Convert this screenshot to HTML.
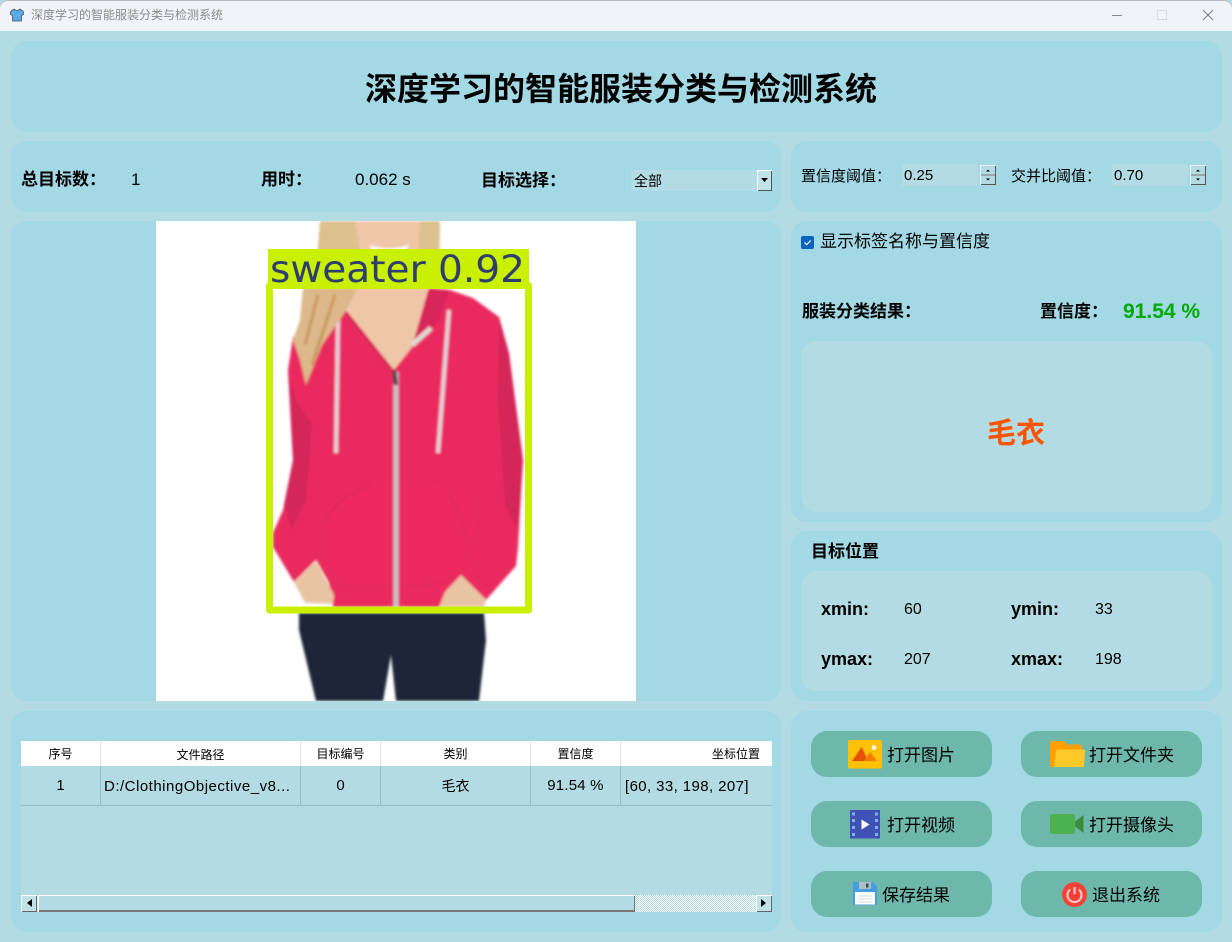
<!DOCTYPE html>
<html lang="zh"><head><meta charset="utf-8"><title>深度学习的智能服装分类与检测系统</title>
<style>
html,body{margin:0;padding:0;background:#fff}
#w{position:relative;width:1232px;height:942px;overflow:hidden;background:#b3dbe3;font-family:"Liberation Sans","Noto Sans CJK SC",sans-serif;color:#000}
.p{position:absolute;background:#a3d8e5;border-radius:16px}
.l{position:absolute;background:#b3dbe3;border-radius:16px}
.t{position:absolute;white-space:nowrap;line-height:24px;height:24px}
.b{font-weight:bold}
.btn{position:absolute;width:181px;height:46px;background:#6eb8ab;border-radius:16px}
.c{text-align:center}
.spin{position:absolute;width:16px;height:20px;background:#b3dbe3;box-shadow:inset 1px 1px 0 #eef,inset -1px -1px 0 #555}
.h{position:absolute;top:741px;height:25px;background:#fff}
.ln{position:absolute;background:#98bcc7}
</style></head><body>
<div id="w">
<div style="position:absolute;left:0;top:0;width:1232px;height:31px;background:#f1f3f8;border-radius:8px 8px 0 0;box-shadow:inset 0 1px 0 #bbb"></div>
<svg style="position:absolute;left:10px;top:8px" width="14" height="14" viewBox="0 0 14 14"><path d="M4 1 1 3 0 6l2.500 1.500V13h9V7.500L14 6l-1-3-3-2-3 2z" fill="#5ba8e6" stroke="#45596b" stroke-width=".8"/></svg>
<div class="t" style="left:31px;top:3px;font-size:12px;color:#8a8a8a">深度学习的智能服装分类与检测系统</div>
<svg style="position:absolute;left:1100px;top:0" width="125" height="31"><path d="M12 15.500h10" stroke="#8a8a8a"/><rect x="57.500" y="10.500" width="9" height="9" fill="none" stroke="#dcdcdf"/><path d="M103 10l10 10M113 10l-10 10" stroke="#808080" fill="none"/></svg>

<div class="p" style="left:11px;top:41px;width:1211px;height:91px"></div>
<div class="t b c" style="left:11px;top:70px;width:1220px;height:38px;line-height:38px;font-size:32px;">深度学习的智能服装分类与检测系统</div>

<div class="p" style="left:11px;top:141px;width:770px;height:71px"></div>
<div class="p" style="left:791px;top:141px;width:431px;height:71px"></div>
<div class="t b" style="left:21px;top:168px;font-size:17px">总目标数：</div>
<div class="t" style="left:131px;top:168px;font-size:17px">1</div>
<div class="t b" style="left:261px;top:168px;font-size:17px">用时：</div>
<div class="t" style="left:355px;top:168px;font-size:17px">0.062 s</div>
<div class="t b" style="left:481px;top:169px;font-size:17px">目标选择：</div>
<div style="position:absolute;left:631px;top:170px;width:141px;height:21px;background:#b3dbe3"></div>
<div class="t" style="left:634px;top:169px;font-size:14px">全部</div>
<div style="position:absolute;left:757px;top:170px;width:15px;height:21px;background:#c0e2e8;box-shadow:inset 1px 1px 0 #fff,inset -1px -1px 0 #555"></div>
<svg style="position:absolute;left:760px;top:177px" width="9" height="6"><path d="M1 1h7L4.500 5z" fill="#000"/></svg>

<div class="t" style="left:801px;top:165px;font-size:15px">置信度阈值：</div>
<div style="position:absolute;left:902px;top:164px;width:76px;height:22px;background:#b3dbe3"></div>
<div class="t" style="left:904px;top:164px;font-size:15px">0.25</div>
<div class="spin" style="left:980px;top:165px"></div>
<svg style="position:absolute;left:980px;top:165px" width="16" height="20"><path d="M1 10h14" stroke="#777"/><path d="M6 6.500h4L8 4.500zM6 13.500h4L8 15.500z" fill="#000"/></svg>
<div class="t" style="left:1011px;top:165px;font-size:15px">交并比阈值：</div>
<div style="position:absolute;left:1112px;top:164px;width:76px;height:22px;background:#b3dbe3"></div>
<div class="t" style="left:1114px;top:164px;font-size:15px">0.70</div>
<div class="spin" style="left:1190px;top:165px"></div>
<svg style="position:absolute;left:1190px;top:165px" width="16" height="20"><path d="M1 10h14" stroke="#777"/><path d="M6 6.500h4L8 4.500zM6 13.500h4L8 15.500z" fill="#000"/></svg>

<div class="p" style="left:11px;top:221px;width:770px;height:480px"></div>
<svg style="position:absolute;left:156px;top:221px" width="480" height="480" viewBox="156 221 480 480">
<defs><filter id="f" x="-5%" y="-5%" width="110%" height="110%"><feGaussianBlur stdDeviation="1.200"/></filter></defs>
<rect x="156" y="221" width="480" height="480" fill="#fff"/>
<g filter="url(#f)">
<path d="M299 613H484L486 640 479 701H396L391 655 383 701H316L299 630z" fill="#1e2838"/>
<path d="M320 221H440L439 285 316 285 316 270z" fill="#dcc08e"/>
<path d="M355 221H420L418 260 428 290 412 347 394 372 346 313 358 288 362 262z" fill="#f0c6a8"/>
<path d="M369 245q20 7 40 0l-3 6h-33z" fill="#fff"/>
<path d="M429 288 450 290 473 298 499 317 509 353 523 460 521 493 518 548 516 566 486 600 461 575 439 607H333L329 583 316 560 294 582 273 547 273 533 283 510 293 460 288 370 293 337 336 320 346 310 394 370 412 347z" fill="#ea2a5e"/>
<path d="M412 347 428 290 449 290 440 320 433 327z" fill="#d8265a"/>
<path d="M284 505 293 460 288 370 296 400 312 425 306 500 292 530zM499 317 509 353 523 460 518 530 505 505 498 400z" fill="#d42858"/>
<path d="M318 520 345 490 392 480 392 588 333 588zM400 480 470 490 480 560 460 590 400 590z" fill="#f23268" opacity=".35"/>
<path d="M322 525q15-30 50-40M470 555q-5-35-20-60M333 585q30 3 60 0M400 585q30 5 55-8" stroke="#c92050" stroke-width="1.500" fill="none" opacity=".45"/>
<path d="M338 320 336 453M449 310 438 453" stroke="#e4d4dc" stroke-width="4" fill="none"/>
<path d="M396 372 396 607" stroke="#c8c0c8" stroke-width="5"/>
<path d="M394 370 396 385" stroke="#444" stroke-width="4"/>
<path d="M412 345 431 328" stroke="#e0dad6" stroke-width="5"/>
<path d="M346 313 394 372" stroke="#b81e4a" stroke-width="1.500" fill="none"/>
<path d="M461 575 486 600 484 607 439 607 445 592zM294 582 316 561 334 595 333 604 305 603z" fill="#e8c4a4"/>
<path d="M303 288H358L348 308 338 322 322 345 306 385 300 360 293 340 300 320z" fill="#dcb88a"/>
<path d="M318 295 305 345M335 295 312 365" stroke="#c99858" stroke-width="3" fill="none"/>
</g>
<path d="M269.500 285.500H528.500V610H269.500z" stroke-width="7" stroke-linejoin="round" fill="none" stroke="#c8f000"/>
<rect x="268" y="249" width="261" height="38" fill="#c8f000"/>
<text x="270" y="282" font-family="DejaVu Sans,sans-serif" font-size="37" textLength="255" lengthAdjust="spacingAndGlyphs" fill="#2f3e6e">sweater 0.92</text>
</svg>

<div class="p" style="left:791px;top:221px;width:431px;height:301px"></div>
<div style="position:absolute;left:801px;top:236px;width:13px;height:13px;background:#0a64c0;border-radius:2px"></div>
<svg style="position:absolute;left:801px;top:236px" width="13" height="13"><path d="M3.500 6.500l2.200 2.200 4-4.200" stroke="#fff" stroke-width="1.200" fill="none"/></svg>
<div class="t" style="left:820px;top:230px;font-size:17px">显示标签名称与置信度</div>
<div class="t b" style="left:802px;top:300px;font-size:17px">服装分类结果：</div>
<div class="t b" style="left:1040px;top:300px;font-size:17px">置信度：</div>
<div class="t b" style="left:1123px;top:300px;font-size:21px;color:#00aa00">91.54 %</div>
<div class="l" style="left:801px;top:341px;width:411px;height:171px"></div>
<div class="t b c" style="left:801px;top:418px;width:430px;height:32px;line-height:32px;font-size:29px;color:#ff5500">毛衣</div>

<div class="p" style="left:791px;top:531px;width:431px;height:170px"></div>
<div class="t b" style="left:811px;top:540px;font-size:17px">目标位置</div>
<div class="l" style="left:801px;top:571px;width:411px;height:120px"></div>
<div class="t b" style="left:821px;top:597px;font-size:18px;">xmin:</div>
<div class="t" style="left:904px;top:598px;font-size:16px">60</div>
<div class="t b" style="left:1011px;top:597px;font-size:18px">ymin:</div>
<div class="t" style="left:1095px;top:598px;font-size:16px">33</div>
<div class="t b" style="left:821px;top:647px;font-size:18px">ymax:</div>
<div class="t" style="left:904px;top:648px;font-size:16px">207</div>
<div class="t b" style="left:1011px;top:647px;font-size:18px">xmax:</div>
<div class="t" style="left:1095px;top:648px;font-size:16px">198</div>

<div class="p" style="left:11px;top:711px;width:770px;height:221px"></div>
<div style="position:absolute;left:21px;top:741px;width:751px;height:171px;background:#b3dbe3"></div>
<div class="h" style="left:21px;width:751px"></div>
<div style="position:absolute;left:100px;top:741px;width:1px;height:25px;background:#e3e3e3"></div>
<div style="position:absolute;left:300px;top:741px;width:1px;height:25px;background:#e3e3e3"></div>
<div style="position:absolute;left:380px;top:741px;width:1px;height:25px;background:#e3e3e3"></div>
<div style="position:absolute;left:530px;top:741px;width:1px;height:25px;background:#e3e3e3"></div>
<div style="position:absolute;left:620px;top:741px;width:1px;height:25px;background:#e3e3e3"></div>
<div class="ln" style="left:100px;top:766px;width:1px;height:40px"></div>
<div class="ln" style="left:300px;top:766px;width:1px;height:40px"></div>
<div class="ln" style="left:380px;top:766px;width:1px;height:40px"></div>
<div class="ln" style="left:530px;top:766px;width:1px;height:40px"></div>
<div class="ln" style="left:620px;top:766px;width:1px;height:40px"></div>
<div class="ln" style="left:21px;top:805px;width:751px;height:1px"></div>
<div class="t c" style="left:21px;top:742px;width:79px;font-size:12px">序号</div>
<div class="t c" style="left:101px;top:743px;width:199px;font-size:12px">文件路径</div>
<div class="t c" style="left:301px;top:742px;width:79px;font-size:12px">目标编号</div>
<div class="t c" style="left:381px;top:742px;width:149px;font-size:12px">类别</div>
<div class="t c" style="left:531px;top:742px;width:89px;font-size:12px">置信度</div>
<div class="t" style="left:712px;top:742px;font-size:12px">坐标位置</div>
<div class="t c" style="left:21px;top:774px;width:79px;font-size:15px">1</div>
<div class="t" style="left:104px;top:774px;width:194px;overflow:hidden;font-size:15px;letter-spacing:.5px;padding-top:1px">D:/ClothingObjective_v8...</div>
<div class="t c" style="left:301px;top:774px;width:79px;font-size:15px">0</div>
<div class="t c" style="left:381px;top:774px;width:149px;font-size:14px">毛衣</div>
<div class="t c" style="left:531px;top:774px;width:89px;font-size:15px;letter-spacing:.2px">91.54 %</div>
<div class="t" style="left:625px;top:775px;font-size:15px;letter-spacing:.4px">[60, 33, 198, 207]</div>

<div style="position:absolute;left:21px;top:895px;width:751px;height:17px;background:repeating-conic-gradient(#fff 0 25%,#b3dbe3 0 50%) 0 0/2px 2px"></div>
<div style="position:absolute;left:21px;top:895px;width:16px;height:17px;background:#c0e2e8;box-shadow:inset 1px 1px 0 #fff,inset -1px -1px 0 #666"></div>
<div style="position:absolute;left:38px;top:895px;width:597px;height:17px;background:#b3dbe3;box-shadow:inset 1px 1px 0 #fff,inset -1px -2px 0 #777"></div>
<div style="position:absolute;left:756px;top:895px;width:16px;height:17px;background:#c0e2e8;box-shadow:inset 1px 1px 0 #fff,inset -1px -1px 0 #666"></div>
<svg style="position:absolute;left:21px;top:895px" width="751" height="17"><path d="M11 4v8L6 8zM740 4v8l5-4z" fill="#000"/></svg>

<div class="p" style="left:791px;top:711px;width:431px;height:221px"></div>
<div class="btn" style="left:811px;top:731px"></div>
<div class="btn" style="left:1021px;top:731px"></div>
<div class="btn" style="left:811px;top:801px"></div>
<div class="btn" style="left:1021px;top:801px"></div>
<div class="btn" style="left:811px;top:871px"></div>
<div class="btn" style="left:1021px;top:871px"></div>
<div class="t" style="left:887px;top:744px;font-size:17px">打开图片</div>
<div class="t" style="left:1089px;top:744px;font-size:17px">打开文件夹</div>
<div class="t" style="left:887px;top:814px;font-size:17px">打开视频</div>
<div class="t" style="left:1089px;top:814px;font-size:17px">打开摄像头</div>
<div class="t" style="left:882px;top:884px;font-size:17px">保存结果</div>
<div class="t" style="left:1092px;top:884px;font-size:17px">退出系统</div>

<svg style="position:absolute;left:848px;top:740px" width="34" height="29"><rect width="34" height="28.500" rx="2" fill="#ffc107"/><path d="M4 21 13.700 7 20 21z" fill="#e65100"/><path d="M16 21 22 12 29 21z" fill="#f57c00"/><circle cx="26" cy="7.500" r="2.500" fill="#fff8e1"/></svg>
<svg style="position:absolute;left:1050px;top:741px" width="36" height="27"><path d="M2 0h11l4 3.500h13a2 2 0 0 1 2 2V26H2a2 2 0 0 1-2-2V2a2 2 0 0 1 2-2z" fill="#ffa000"/><path d="M8 8.500H33.500a1.500 1.500 0 0 1 1.500 1.500L34 24.500a1.500 1.500 0 0 1-1.500 1.500H4L6 10.500a2 2 0 0 1 2-2z" fill="#ffca28"/></svg>
<svg style="position:absolute;left:850px;top:810px" width="30" height="29"><rect width="30" height="28.500" fill="#3f51b5"/><g fill="#90caf9" opacity=".8"><rect x="2" y="2.500" width="3" height="3"/><rect x="2" y="9" width="3" height="3"/><rect x="2" y="16" width="3" height="3"/><rect x="2" y="23" width="3" height="3"/><rect x="25" y="2.500" width="3" height="3"/><rect x="25" y="9" width="3" height="3"/><rect x="25" y="16" width="3" height="3"/><rect x="25" y="23" width="3" height="3"/></g><path d="M11.500 9.500v10l8-5z" fill="#fff"/></svg>
<svg style="position:absolute;left:1050px;top:814px" width="34" height="20"><rect width="25" height="20" rx="2.500" fill="#4caf50"/><path d="M25 7.500 33.500 1v18L25 12.500z" fill="#388e3c"/></svg>
<svg style="position:absolute;left:853px;top:882px" width="24" height="23"><path d="M1 0h19l4 4v18a1 1 0 0 1-1 1H1a1 1 0 0 1-1-1V1a1 1 0 0 1 1-1z" fill="#42a0e0"/><rect x="6" y="0" width="12" height="7" fill="#b0bec5"/><rect x="13" y="1.500" width="2.500" height="4" fill="#37474f"/><rect x="2" y="10" width="20" height="12.500" fill="#fff"/><path d="M4.500 14h15M4.500 17h15M4.500 20h15" stroke="#cfd8dc"/></svg>
<svg style="position:absolute;left:1062px;top:882px" width="25" height="25"><circle cx="12.500" cy="12.500" r="12.500" fill="#f44336"/><path d="M8.200 7.500a7 7 0 1 0 8.600 0" fill="none" stroke="#ffcdd2" stroke-width="2"/><path d="M12.500 5v7" stroke="#ffcdd2" stroke-width="2"/></svg>
</div>
</body></html>
